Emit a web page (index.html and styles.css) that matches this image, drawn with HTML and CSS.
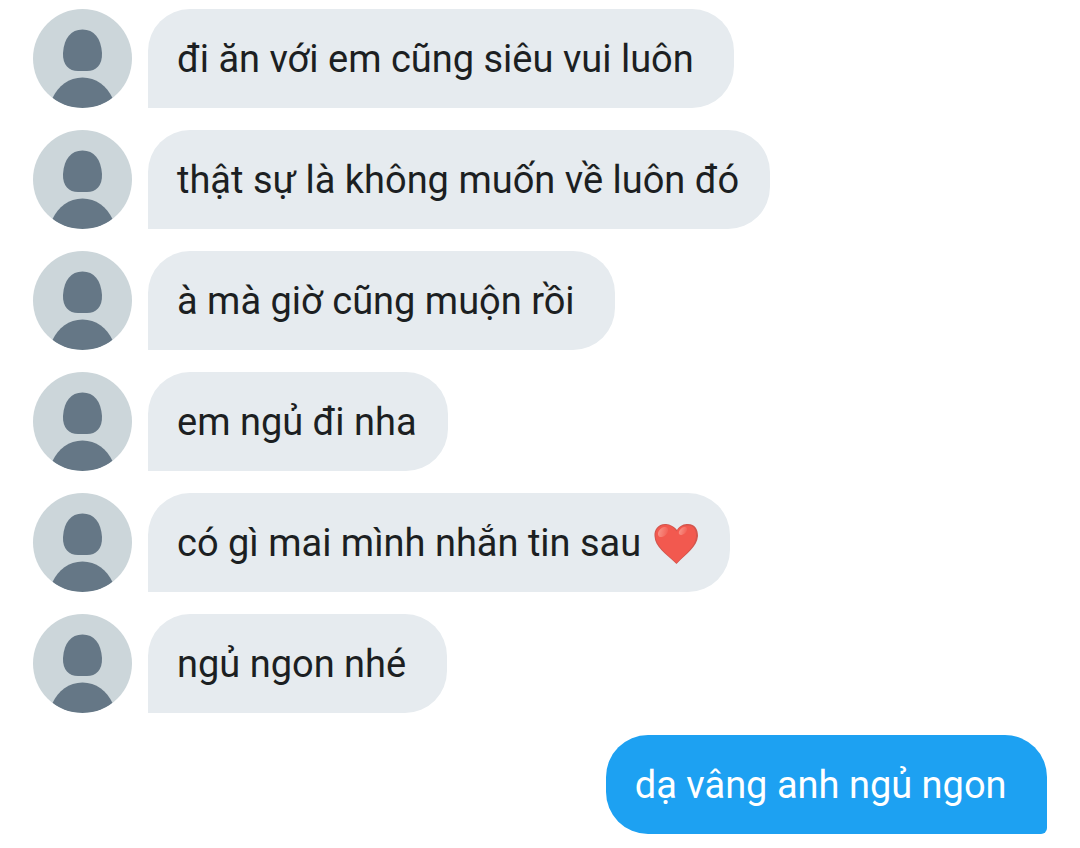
FILE: index.html
```html
<!DOCTYPE html>
<html lang="vi">
<head>
    <meta charset="utf-8">
    <meta name="viewport" content="width=device-width, initial-scale=1">
    <title>Messages</title>
    <link rel="stylesheet" href="styles.css">
</head>
<body>
    <svg class="symbols" aria-hidden="true">
        <symbol id="person" viewBox="0 0 99 99">
            <path d="M49.500 20.500C61 20.500 68 29 69 44C69.500 56 63 62 54 62H45C36 62 29.500 56 30 44C31 29 38 20.500 49.500 20.500Z"/>
            <path d="M19.500 89C25 77 36 68.500 49.500 68.500S74 77 79.500 89C72 96 61 99 49.500 99S27 96 19.500 89Z"/>
        </symbol>
        <linearGradient id="shine" x1="0" y1="0" x2="1" y2="1">
            <stop offset="0" stop-color="#f99a8e"/>
            <stop offset="1" stop-color="#f2594f"/>
        </linearGradient>
    </svg>
    <main class="chat">
        <div class="message">
            <svg class="avatar" aria-hidden="true"><use href="#person"/></svg>
            <p class="bubble">đi ăn với em cũng siêu vui luôn&nbsp;</p>
        </div>
        <div class="message">
            <svg class="avatar" aria-hidden="true"><use href="#person"/></svg>
            <p class="bubble">thật sự là không muốn về luôn đó</p>
        </div>
        <div class="message">
            <svg class="avatar" aria-hidden="true"><use href="#person"/></svg>
            <p class="bubble">à mà giờ cũng muộn rồi&nbsp;</p>
        </div>
        <div class="message">
            <svg class="avatar" aria-hidden="true"><use href="#person"/></svg>
            <p class="bubble">em ngủ đi nha</p>
        </div>
        <div class="message">
            <svg class="avatar" aria-hidden="true"><use href="#person"/></svg>
            <p class="bubble">có gì mai mình nhắn tin sau
                <svg class="heart" viewBox="0 0 46 42" role="img" aria-label="❤️">
                    <path fill="#d2564e" d="M24 7C20 2 15 1 12 1C5 1 1 7 1.500 13C2 24 12 30 23.500 41C34 30 44 24 45 13C45 6 42 1 35 1C31 1 27 2 24 7Z"/>
                    <path fill="#f2594f" d="M23.500 8.500C20 3 16 2 12.500 2C6 2 2 7 2.500 13C3 23 13 30 23.500 40C33 30 42 24 43 14C43.500 7 41 2.500 35 2.500C30 2.500 26 4 23.500 8.500Z"/>
                    <ellipse cx="10" cy="9" rx="6" ry="4" transform="rotate(-45 10 9)" fill="url(#shine)"/>
                    <ellipse cx="30" cy="8" rx="5" ry="3" transform="rotate(-42 30 8)" fill="url(#shine)"/>
                </svg>
            </p>
        </div>
        <div class="message">
            <svg class="avatar" aria-hidden="true"><use href="#person"/></svg>
            <p class="bubble">ngủ ngon nhé&nbsp;</p>
        </div>
        <div class="message sent">
            <p class="bubble">dạ vâng anh ngủ ngon&nbsp;</p>
        </div>
    </main>
</body>
</html>
```
FILE: styles.css
```css
body {
    margin: 0;
    background-color: #fff;
    color: #1c1f22;
    font-family: Roboto, sans-serif;
    font-size: 38px;
    line-height: 47px;
}
.symbols {
    position: absolute;
    width: 0;
    height: 0;
}
.chat {
    display: flex;
    flex-direction: column;
    gap: 22px;
    padding: 9px 33px 14px;
}
.message {
    display: flex;
    align-items: flex-end;
    gap: 16px;
}
.avatar {
    flex: none;
    width: 99px;
    height: 99px;
    border-radius: 50%;
    background-color: #ccd6da;
    fill: #657786;
}
.bubble {
    margin: 0;
    padding: 27px 31px 25px 29px;
    border-radius: 42px 42px 42px 0;
    background-color: #e6ebef;
}
.heart {
    width: 46px;
    height: 42px;
    margin-left: 2px;
    vertical-align: -9px;
}
.sent {
    justify-content: flex-end;
}
.sent .bubble {
    border-radius: 42px 42px 6px 42px;
    background-color: #1da1f2;
    color: #fff;
}
```
